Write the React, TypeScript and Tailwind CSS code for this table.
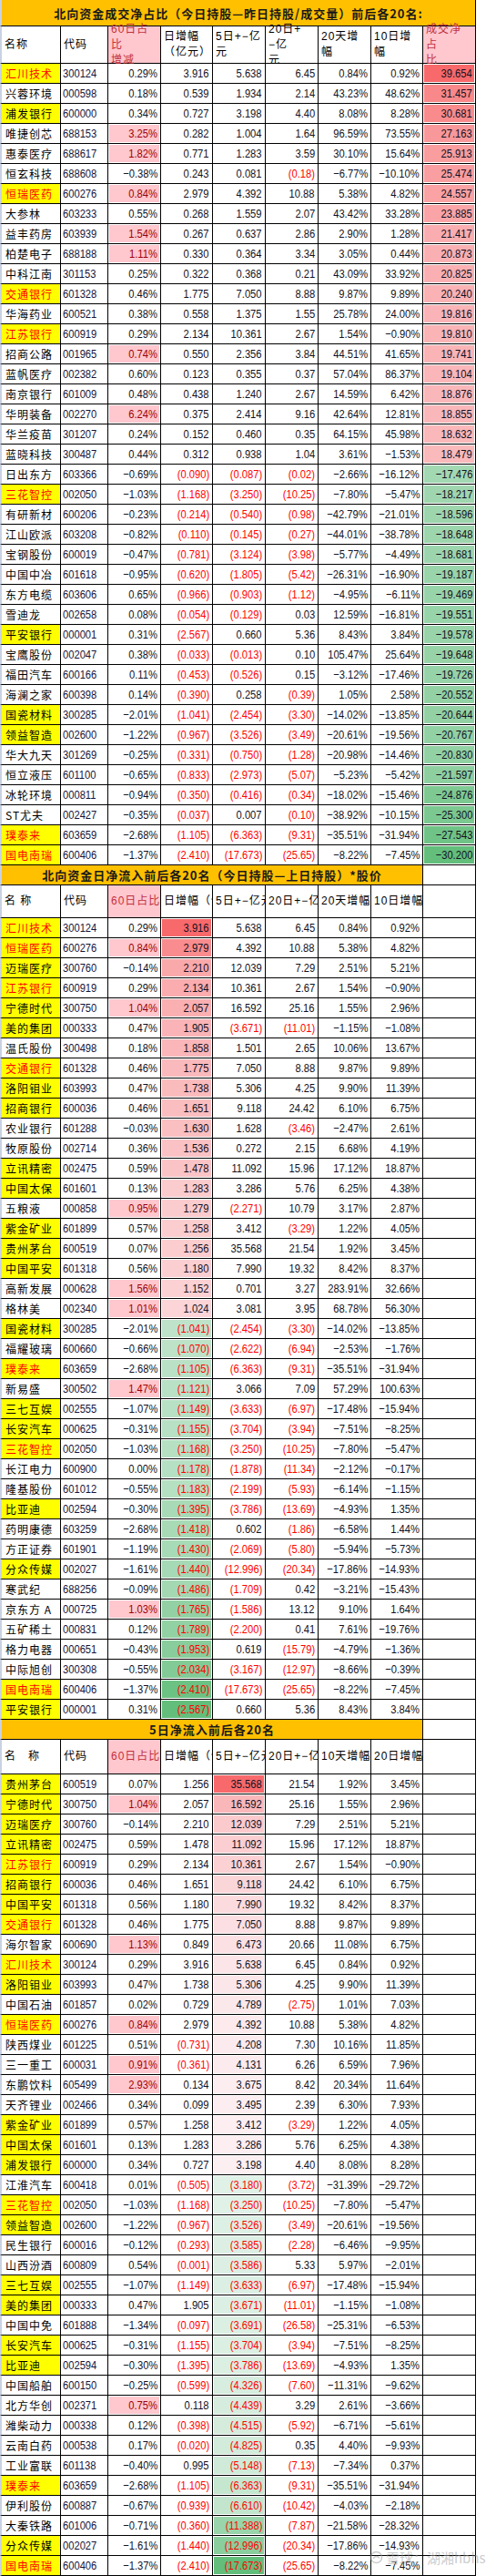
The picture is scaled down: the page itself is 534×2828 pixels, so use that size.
import React from "react";

const NUMF = "[font-family:'Liberation_Sans','Noto_Sans_CJK_SC',sans-serif]";
const CJKF = "[font-family:'Noto_Sans_CJK_SC','Liberation_Sans',sans-serif]";
const GRID = "grid grid-cols-[67px_52px_58px_57px_58px_58px_58px_57px_58px]";
const B = "border-r border-b border-black";
const FIRST = "border-l-2 border-l-[#c9d2e3]";

const T1 = `汇川技术|R|300124|0.29%|3.916|5.638|6.45|0.84%|0.92%|39.654
兴蓉环境||000598|0.18%|0.539|1.934|2.14|43.23%|48.62%|31.457
浦发银行|Y|600000|0.34%|0.727|3.198|4.40|8.08%|8.28%|30.681
唯捷创芯||688153|3.25%|0.282|1.004|1.64|96.59%|73.55%|27.163
惠泰医疗||688617|1.82%|0.771|1.283|3.59|30.10%|15.64%|25.913
恒玄科技||688608|-0.38%|0.243|0.081|(0.18)|-6.77%|-10.10%|25.474
恒瑞医药|R|600276|0.84%|2.979|4.392|10.88|5.38%|4.82%|24.557
大参林||603233|0.55%|0.268|1.559|2.07|43.42%|33.28%|23.885
益丰药房||603939|1.54%|0.267|0.637|2.86|2.90%|1.28%|21.417
柏楚电子||688188|1.11%|0.330|0.364|3.34|3.05%|0.44%|20.873
中科江南||301153|0.25%|0.322|0.368|0.21|43.09%|33.92%|20.825
交通银行|R|601328|0.46%|1.775|7.050|8.88|9.87%|9.89%|20.240
华海药业||600521|0.38%|0.558|1.375|1.55|25.78%|24.00%|19.816
江苏银行|R|600919|0.29%|2.134|10.361|2.67|1.54%|-0.90%|19.810
招商公路||001965|0.74%|0.550|2.356|3.84|44.51%|41.65%|19.741
蓝帆医疗||002382|0.60%|0.123|0.355|0.37|57.04%|86.37%|19.104
南京银行||601009|0.48%|0.438|1.240|2.67|14.59%|6.42%|18.876
华明装备||002270|6.24%|0.375|2.414|9.16|42.64%|12.81%|18.855
华兰疫苗||301207|0.24%|0.152|0.460|0.35|64.15%|45.98%|18.632
蓝晓科技||300487|0.44%|0.312|0.938|1.04|3.61%|-1.53%|18.479
日出东方||603366|-0.69%|(0.090)|(0.087)|(0.02)|-2.66%|-16.12%|-17.476
三花智控|R|002050|-1.03%|(1.168)|(3.250)|(10.25)|-7.80%|-5.47%|-18.217
有研新材||600206|-0.23%|(0.214)|(0.540)|(0.98)|-42.79%|-21.01%|-18.596
江山欧派||603208|-0.82%|(0.110)|(0.145)|(0.27)|-44.01%|-38.78%|-18.648
宝钢股份||600019|-0.47%|(0.781)|(3.124)|(3.98)|-5.77%|-4.49%|-18.681
中国中冶||601618|-0.95%|(0.620)|(1.805)|(5.42)|-26.31%|-16.90%|-19.187
东方电缆||603606|0.65%|(0.966)|(0.903)|(1.12)|-4.95%|-6.11%|-19.469
雪迪龙||002658|0.08%|(0.054)|(0.129)|0.03|12.59%|-16.81%|-19.551
平安银行|Y|000001|0.31%|(2.567)|0.660|5.36|8.43%|3.84%|-19.578
宝鹰股份||002047|0.38%|(0.033)|(0.013)|0.10|105.47%|25.64%|-19.648
福田汽车||600166|0.11%|(0.453)|(0.526)|0.15|-3.12%|-17.46%|-19.726
海澜之家||600398|0.14%|(0.390)|0.258|(0.39)|1.05%|2.58%|-20.552
国瓷材料|Y|300285|-2.01%|(1.041)|(2.454)|(3.30)|-14.02%|-13.85%|-20.644
领益智造|Y|002600|-1.22%|(0.967)|(3.526)|(3.49)|-20.61%|-19.56%|-20.767
华大九天||301269|-0.25%|(0.331)|(0.750)|(1.28)|-20.98%|-14.46%|-20.830
恒立液压||601100|-0.65%|(0.833)|(2.973)|(5.07)|-5.23%|-5.42%|-21.597
冰轮环境||000811|-0.94%|(0.350)|(0.416)|(0.34)|-18.02%|-15.46%|-24.876
ST尤夫||002427|-0.35%|(0.037)|0.007|(0.10)|-38.92%|-10.15%|-25.300
璞泰来|R|603659|-2.68%|(1.105)|(6.363)|(9.31)|-35.51%|-31.94%|-27.543
国电南瑞|R|600406|-1.37%|(2.410)|(17.673)|(25.65)|-8.22%|-7.45%|-30.200`;

const T2 = `汇川技术|R|300124|0.29%|3.916|5.638|6.45|0.84%|0.92%
恒瑞医药|R|600276|0.84%|2.979|4.392|10.88|5.38%|4.82%
迈瑞医疗|Y|300760|-0.14%|2.210|12.039|7.29|2.51%|5.21%
江苏银行|R|600919|0.29%|2.134|10.361|2.67|1.54%|-0.90%
宁德时代|Y|300750|1.04%|2.057|16.592|25.16|1.55%|2.96%
美的集团|Y|000333|0.47%|1.905|(3.671)|(11.01)|-1.15%|-1.08%
温氏股份||300498|0.18%|1.858|1.501|2.65|10.06%|13.67%
交通银行|R|601328|0.46%|1.775|7.050|8.88|9.87%|9.89%
洛阳钼业|Y|603993|0.47%|1.738|5.306|4.25|9.90%|11.39%
招商银行|Y|600036|0.46%|1.651|9.118|24.42|6.10%|6.75%
农业银行||601288|-0.03%|1.630|1.628|(3.46)|-2.47%|2.61%
牧原股份||002714|0.36%|1.536|0.272|2.15|6.68%|4.19%
立讯精密|Y|002475|0.59%|1.478|11.092|15.96|17.12%|18.87%
中国太保|Y|601601|0.13%|1.283|3.286|5.76|6.25%|4.38%
五粮液||000858|0.95%|1.279|(2.271)|10.79|3.17%|2.87%
紫金矿业|Y|601899|0.57%|1.258|3.412|(3.29)|1.22%|4.05%
贵州茅台|Y|600519|0.07%|1.256|35.568|21.54|1.92%|3.45%
中国平安|Y|601318|0.56%|1.180|7.990|19.32|8.42%|8.37%
高新发展||000628|1.56%|1.152|0.701|3.27|283.91%|32.66%
格林美||002340|1.01%|1.024|3.081|3.95|68.78%|56.30%
国瓷材料|Y|300285|-2.01%|(1.041)|(2.454)|(3.30)|-14.02%|-13.85%
福耀玻璃||600660|-0.66%|(1.070)|(2.622)|(6.94)|-2.53%|-1.76%
璞泰来|R|603659|-2.68%|(1.105)|(6.363)|(9.31)|-35.51%|-31.94%
新易盛||300502|1.47%|(1.121)|3.066|7.09|57.29%|100.63%
三七互娱|Y|002555|-1.07%|(1.149)|(3.633)|(6.97)|-17.48%|-15.94%
长安汽车|Y|000625|-0.31%|(1.155)|(3.704)|(3.94)|-7.51%|-8.25%
三花智控|R|002050|-1.03%|(1.168)|(3.250)|(10.25)|-7.80%|-5.47%
长江电力||600900|0.00%|(1.178)|(1.878)|(11.34)|-2.12%|-0.17%
隆基股份||601012|-0.55%|(1.183)|(2.199)|(5.93)|-6.14%|-1.15%
比亚迪|Y|002594|-0.30%|(1.395)|(3.786)|(13.69)|-4.93%|1.35%
药明康德||603259|-2.68%|(1.418)|0.602|(1.86)|-6.58%|1.44%
方正证券||601901|-1.19%|(1.430)|(2.069)|(5.80)|-5.94%|-5.73%
分众传媒|Y|002027|-1.61%|(1.440)|(12.996)|(20.34)|-17.86%|-14.93%
寒武纪||688256|-0.09%|(1.486)|(1.709)|0.42|-3.21%|-15.43%
京东方 A||000725|1.03%|(1.765)|(1.586)|13.12|9.10%|1.64%
五矿稀土||000831|0.12%|(1.789)|(2.200)|0.41|7.61%|-19.76%
格力电器||000651|-0.43%|(1.953)|0.619|(15.79)|-4.79%|-1.36%
中际旭创||300308|-0.55%|(2.034)|(3.167)|(12.97)|-8.66%|-0.39%
国电南瑞|R|600406|-1.37%|(2.410)|(17.673)|(25.65)|-8.22%|-7.45%
平安银行|Y|000001|0.31%|(2.567)|0.660|5.36|8.43%|3.84%`;

const T3 = `贵州茅台|Y|600519|0.07%|1.256|35.568|21.54|1.92%|3.45%
宁德时代|Y|300750|1.04%|2.057|16.592|25.16|1.55%|2.96%
迈瑞医疗|Y|300760|-0.14%|2.210|12.039|7.29|2.51%|5.21%
立讯精密|Y|002475|0.59%|1.478|11.092|15.96|17.12%|18.87%
江苏银行|R|600919|0.29%|2.134|10.361|2.67|1.54%|-0.90%
招商银行|Y|600036|0.46%|1.651|9.118|24.42|6.10%|6.75%
中国平安|Y|601318|0.56%|1.180|7.990|19.32|8.42%|8.37%
交通银行|R|601328|0.46%|1.775|7.050|8.88|9.87%|9.89%
海尔智家||600690|1.13%|0.849|6.473|20.66|11.08%|6.75%
汇川技术|R|300124|0.29%|3.916|5.638|6.45|0.84%|0.92%
洛阳钼业|Y|603993|0.47%|1.738|5.306|4.25|9.90%|11.39%
中国石油||601857|0.02%|0.729|4.789|(2.75)|1.01%|7.03%
恒瑞医药|R|600276|0.84%|2.979|4.392|10.88|5.38%|4.82%
陕西煤业||601225|0.51%|(0.731)|4.208|7.30|10.16%|11.85%
三一重工||600031|0.91%|(0.361)|4.131|6.26|6.59%|7.96%
东鹏饮料||605499|2.93%|0.134|3.675|8.42|20.34%|11.64%
天齐锂业||002466|0.34%|0.099|3.495|2.39|6.30%|7.93%
紫金矿业|Y|601899|0.57%|1.258|3.412|(3.29)|1.22%|4.05%
中国太保|Y|601601|0.13%|1.283|3.286|5.76|6.25%|4.38%
浦发银行|Y|600000|0.34%|0.727|3.198|4.40|8.08%|8.28%
江淮汽车||600418|0.01%|(0.505)|(3.180)|(3.72)|-31.39%|-29.72%
三花智控|R|002050|-1.03%|(1.168)|(3.250)|(10.25)|-7.80%|-5.47%
领益智造|Y|002600|-1.22%|(0.967)|(3.526)|(3.49)|-20.61%|-19.56%
民生银行||600016|-0.12%|(0.293)|(3.585)|(2.28)|-6.46%|-9.95%
山西汾酒||600809|0.54%|(0.001)|(3.586)|5.33|5.97%|-2.01%
三七互娱|Y|002555|-1.07%|(1.149)|(3.633)|(6.97)|-17.48%|-15.94%
美的集团|Y|000333|0.47%|1.905|(3.671)|(11.01)|-1.15%|-1.08%
中国中免||601888|-1.34%|(0.097)|(3.691)|(26.58)|-25.31%|-6.53%
长安汽车|Y|000625|-0.31%|(1.155)|(3.704)|(3.94)|-7.51%|-8.25%
比亚迪|Y|002594|-0.30%|(1.395)|(3.786)|(13.69)|-4.93%|1.35%
中国船舶||600150|-0.25%|(0.599)|(4.326)|(7.60)|-11.31%|-9.62%
北方华创||002371|0.75%|0.118|(4.439)|3.29|2.61%|-3.66%
潍柴动力||000338|0.12%|(0.398)|(4.515)|(5.92)|-6.71%|-5.61%
云南白药||000538|0.17%|(0.020)|(4.825)|0.35|4.40%|-9.93%
工业富联||601138|-0.40%|0.995|(5.148)|(7.13)|-7.34%|0.37%
璞泰来|R|603659|-2.68%|(1.105)|(6.363)|(9.31)|-35.51%|-31.94%
伊利股份||600887|-0.67%|(0.939)|(6.610)|(10.42)|-4.03%|-2.18%
大秦铁路||601006|-0.71%|(0.360)|(11.388)|(7.87)|-21.58%|-28.32%
分众传媒|Y|002027|-1.61%|(1.440)|(12.996)|(20.34)|-17.86%|-14.93%
国电南瑞|R|600406|-1.37%|(2.410)|(17.673)|(25.65)|-8.22%|-7.45%`;

const parseRows = (s: string) => s.split("\n").map((l) => l.split("|"));

const toNum = (v: string) => {
  const neg = v.startsWith("(") || v.startsWith("-");
  const n = parseFloat(v.replace(/[()%\-]/g, ""));
  return neg ? -n : n;
};

const lerp = (a: number, b: number, t: number) => Math.round(a + (b - a) * t);

function scaleColor(v: number, vals: number[]) {
  const sorted = [...vals].sort((a, b) => a - b);
  const min = sorted[0];
  const max = sorted[sorted.length - 1];
  const m = sorted.length / 2;
  const mid = (sorted[m - 1] + sorted[m]) / 2;
  let c: number[];
  if (v >= mid) {
    const t = (v - mid) / (max - mid);
    c = [lerp(252, 248, t), lerp(252, 105, t), lerp(255, 107, t)];
  } else {
    const t = (mid - v) / (mid - min);
    c = [lerp(252, 99, t), lerp(252, 190, t), lerp(255, 123, t)];
  }
  return `rgb(${c[0]},${c[1]},${c[2]})`;
}

const show = (v: string) => v.replace(/^-/, "\u2212");

function NameCell({ name, flag }: { name: string; flag: string }) {
  const bg = flag ? "bg-[#FFFF00]" : "bg-white";
  const color = flag === "R" ? "text-[#FF0000]" : "text-black";
  return (
    <div
      className={`h-[22px] ${B} ${FIRST} ${bg} ${color} ${CJKF} flex items-center pl-[4px] text-[12px] leading-none tracking-[1px] whitespace-nowrap overflow-hidden`}
    >
      {name}
    </div>
  );
}

function CodeCell({ code }: { code: string }) {
  return (
    <div className={`h-[22px] ${B} bg-white ${NUMF} flex items-center pl-[2px] text-[13px] leading-none text-[#14143a]`}>
      <span className="inline-block origin-left scale-x-[0.86]">{code}</span>
    </div>
  );
}

function NumCell({ v, pink, fill }: { v: string; pink?: boolean; fill?: string }) {
  const red = v.startsWith("(");
  const textColor = pink ? "text-[#9C0006]" : red ? "text-[#FF0000]" : "text-[#111122]";
  return (
    <div className={`h-[22px] ${B} bg-white p-px`}>
      <div
        className={`h-full flex items-center justify-end pr-[2px] ${NUMF} text-[13px] leading-none whitespace-nowrap ${textColor} ${pink ? "bg-[#FFC7CE]" : ""}`}
        style={fill ? { backgroundColor: fill } : undefined}
      >
        <span className="inline-block origin-right scale-x-[0.86]">{show(v)}</span>
      </div>
    </div>
  );
}

function Empty({ h }: { h: string }) {
  return <div className={`${h} ${B} bg-white`} />;
}

function Title({ text, h, span9 }: { text: string; h: string; span9?: boolean }) {
  return (
    <div className={GRID}>
      <div
        className={`${span9 ? "col-span-9" : "col-span-8"} ${h} ${B} ${FIRST} bg-[#FFC000] flex items-center justify-center ${CJKF} font-bold text-[13px] leading-none tracking-[1px] text-[#1a1a1a] whitespace-nowrap`}
      >
        {text}
      </div>
      {!span9 && <Empty h={h} />}
    </div>
  );
}

function HeadCell({
  children,
  h,
  first,
  pink,
  clip,
}: {
  children?: React.ReactNode;
  h: string;
  first?: boolean;
  pink?: boolean;
  clip?: boolean;
}) {
  return (
    <div
      className={`${h} ${B} ${first ? FIRST : ""} ${pink ? "bg-[#FFC7CE] text-[#C0303C]" : "bg-white text-black"} flex items-center px-[3px] ${NUMF} text-[12px] leading-[17px] tracking-[1px] ${clip ? "whitespace-nowrap overflow-hidden" : ""}`}
    >
      <div>{children}</div>
    </div>
  );
}

function Table1() {
  const rows = parseRows(T1);
  const ratios = rows.map((r) => toNum(r[9]));
  const h = "h-[41px]";
  return (
    <div>
      <Title text="北向资金成交净占比（今日持股—昨日持股/成交量）前后各20名:" h="h-[29px]" span9 />
      <div className={GRID}>
        <HeadCell h={h} first>名称</HeadCell>
        <HeadCell h={h}>代码</HeadCell>
        <HeadCell h={h} pink>
          60日占比
          <br />
          增减
        </HeadCell>
        <HeadCell h={h}>
          日增幅
          <br />
          （亿元）
        </HeadCell>
        <HeadCell h={h}>
          5日+−亿
          <br />
          元
        </HeadCell>
        <HeadCell h={h}>
          20日+−亿
          <br />
          元
        </HeadCell>
        <HeadCell h={h}>20天增幅</HeadCell>
        <HeadCell h={h}>10日增幅</HeadCell>
        <HeadCell h={h} pink>
          成交净占
          <br />
          比
        </HeadCell>
      </div>
      {rows.map((r, i) => (
        <div key={i} className={GRID}>
          <NameCell name={r[0]} flag={r[1]} />
          <CodeCell code={r[2]} />
          <NumCell v={r[3]} pink={toNum(r[3]) > 0.7} />
          <NumCell v={r[4]} />
          <NumCell v={r[5]} />
          <NumCell v={r[6]} />
          <NumCell v={r[7]} />
          <NumCell v={r[8]} />
          <NumCell v={r[9]} fill={scaleColor(toNum(r[9]), ratios)} />
        </div>
      ))}
    </div>
  );
}

function Table23({
  data,
  title,
  titleH,
  headH,
  heads,
  scaleCol,
}: {
  data: string;
  title: string;
  titleH: string;
  headH: string;
  heads: string[];
  scaleCol: number;
}) {
  const rows = parseRows(data);
  const vals = rows.map((r) => toNum(r[scaleCol]));
  return (
    <div>
      <Title text={title} h={titleH} />
      <div className={GRID}>
        {heads.map((t, i) => (
          <HeadCell key={i} h={headH} first={i === 0} pink={i === 2} clip>
            <span className="whitespace-pre">{t}</span>
          </HeadCell>
        ))}
        <Empty h={headH} />
      </div>
      {rows.map((r, i) => (
        <div key={i} className={GRID}>
          <NameCell name={r[0]} flag={r[1]} />
          <CodeCell code={r[2]} />
          <NumCell v={r[3]} pink={toNum(r[3]) > 0.7} />
          {[4, 5, 6, 7, 8].map((c) => (
            <NumCell key={c} v={r[c]} fill={c === scaleCol ? scaleColor(toNum(r[c]), vals) : undefined} />
          ))}
          <Empty h="h-[22px]" />
        </div>
      ))}
    </div>
  );
}

function Watermark() {
  return (
    <div className={`absolute left-[406px] top-[2800px] flex items-center gap-[3px] text-[15px] leading-none text-[#9a9a9a] opacity-50 ${CJKF}`}>
      <svg width="15" height="15" viewBox="0 0 16 16">
        <circle cx="8" cy="8" r="6.5" fill="none" stroke="#9a9a9a" strokeWidth="1.6" />
        <path d="M4.5 9.5 C6 6 10 6 11.5 9" fill="none" stroke="#9a9a9a" strokeWidth="1.6" />
      </svg>
      <span>雪球：湖湘hbhs</span>
    </div>
  );
}

export default function App() {
  return (
    <div className="relative w-[534px] bg-white">
      <Table1 />
      <Table23
        data={T2}
        title="北向资金日净流入前后各20名（今日持股—上日持股）*股价"
        titleH="h-[22px]"
        headH="h-[36px]"
        heads={["名 称", "代码", "60日占比增减", "日增幅（亿元）", "5日+−亿元", "20日+−亿元", "20天增幅", "10日增幅"]}
        scaleCol={4}
      />
      <Table23
        data={T3}
        title="5日净流入前后各20名"
        titleH="h-[22px]"
        headH="h-[38px]"
        heads={["名   称", "代码", "60日占比增减", "日增幅（亿元）", "5日+−亿元", "20日+−亿元", "10天增幅", "20日增幅"]}
        scaleCol={5}
      />
      <Watermark />
    </div>
  );
}
